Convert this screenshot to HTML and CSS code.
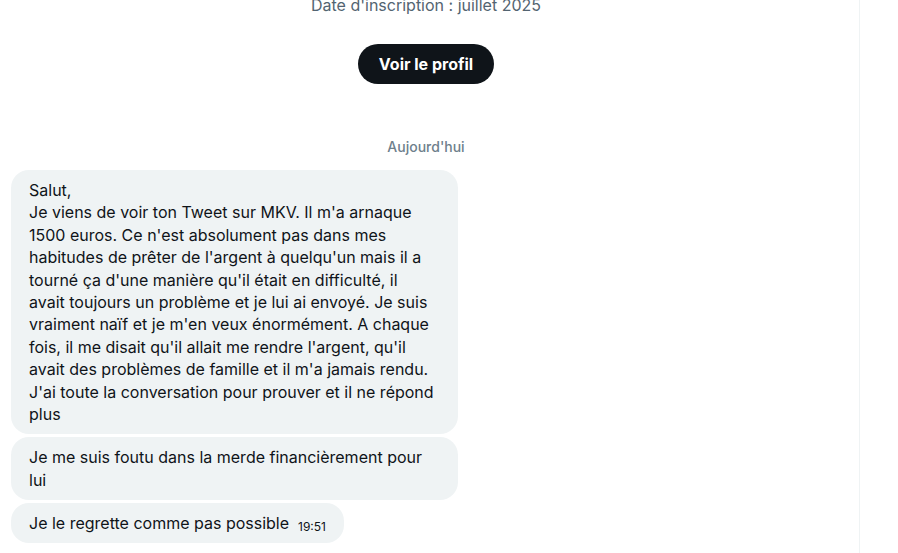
FILE: index.html
```html
<!DOCTYPE html>
<html lang="fr">
  <head>
    <meta charset="UTF-8" />
    <meta name="viewport" content="width=device-width, initial-scale=1.0" />
    <title>Messages</title>
    <link rel="stylesheet" href="styles.css">
  </head>
  <body>
    <main class="conversation">
      <header class="profile">
        <p class="joined">Date d'inscription : juillet 2025</p>
        <button class="profile-btn" type="button">Voir le profil</button>
      </header>

      <h2 class="day">Aujourd'hui</h2>

      <div class="messages">
        <p class="bubble">Salut,<br>
          Je viens de voir ton Tweet sur MKV. Il m'a arnaque<br>
          1500 euros. Ce n'est absolument pas dans mes<br>
          habitudes de prêter de l'argent à quelqu'un mais il a<br>
          tourné ça d'une manière qu'il était en difficulté, il<br>
          avait toujours un problème et je lui ai envoyé. Je suis<br>
          vraiment naïf et je m'en veux énormément. A chaque<br>
          fois, il me disait qu'il allait me rendre l'argent, qu'il<br>
          avait des problèmes de famille et il m'a jamais rendu.<br>
          J'ai toute la conversation pour prouver et il ne répond<br>
          plus</p>
        <p class="bubble">Je me suis foutu dans la merde financièrement pour<br>
          lui</p>
        <p class="bubble last">Je le regrette comme pas possible <time class="time">19:51</time></p>
      </div>
    </main>
  </body>
</html>
```
FILE: styles.css
```css
:root {
  --text: #0f1419;
  --muted: #536471;
  --muted-light: #6e808c;
  --bubble: #eff3f4;
}

* {
  margin: 0;
  padding: 0;
  box-sizing: border-box;
}

body {
  background: white;
  color: var(--text);
  font-family: Inter, sans-serif;
  font-size: 16px;
  line-height: 1.4;
  overflow: hidden;
}

/* Conversation column */
.conversation {
  display: flex;
  flex-direction: column;
  min-height: 100vh;
  margin-right: 38px;
  padding: 0 18px 0 11px;
  border-right: 1px solid var(--bubble);
}

.profile {
  display: flex;
  flex-direction: column;
  align-items: center;
  gap: 28px;
  margin-top: -6px;
}

.joined {
  color: var(--muted);
}

.profile-btn {
  height: 40px;
  padding: 0 21px;
  border: none;
  border-radius: 20px;
  background: var(--text);
  color: white;
  font: inherit;
  font-weight: 700;
  cursor: pointer;
}

.day {
  margin: 53px 0 13px;
  color: var(--muted-light);
  font-size: 14px;
  font-weight: 500;
  text-align: center;
}

/* Message bubbles */
.messages {
  display: flex;
  flex-direction: column;
  align-items: flex-start;
  gap: 3px;
}

.bubble {
  width: 447px;
  max-width: 100%;
  padding: 9px 18px;
  border-radius: 18px;
  background: var(--bubble);
}

.bubble.last {
  display: flex;
  align-items: flex-end;
  gap: 9px;
  width: auto;
}

.time {
  font-size: 12px;
  line-height: 14px;
}
```
